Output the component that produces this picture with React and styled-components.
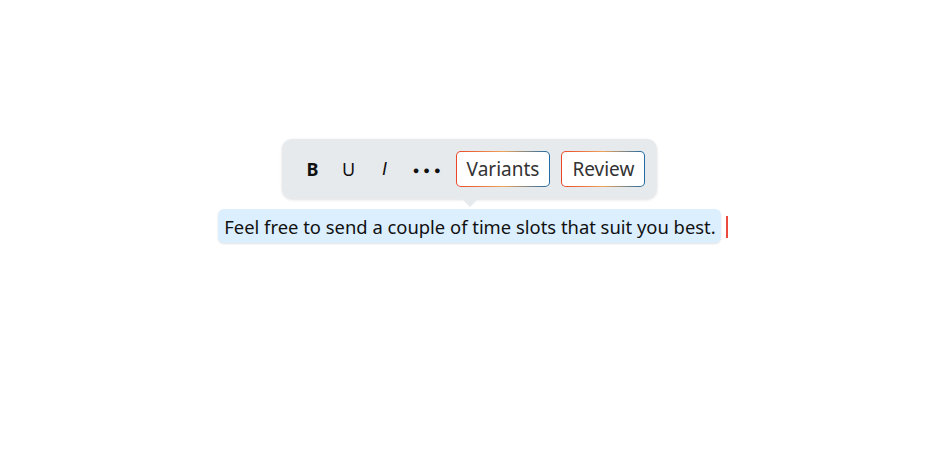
import styled, { createGlobalStyle } from "styled-components"

const GlobalStyle = createGlobalStyle`
  html, body {
    margin: 0;
    padding: 0;
    background: #ffffff;
    font-family: "Noto Sans", "Liberation Sans", sans-serif;
  }
`;

const sentence = 'Feel free to send a couple of time slots that suit you best.';
const formatButtons = [
  { label: 'B', bold: true },
  { label: 'U' },
  { label: 'I', italic: true },
];
const actions = ['Variants', 'Review'];

const Page = styled.main`
  width: 942px;
  height: 453px;
  display: flex;
  flex-flow: column nowrap;
  align-items: center;
  padding-top: 139px;
  padding-right: 3px;
  box-sizing: border-box;
`;

const Toolbar = styled.div`
  position: relative;
  display: flex;
  align-items: center;
  gap: 2px;
  padding: 12px 12px 12px 14px;
  background: #e6eaed;
  border-radius: 10px;
  box-shadow: 0 1px 3px rgba(0, 0, 0, 0.12);

  &::after {
    content: '';
    position: absolute;
    left: 180px;
    bottom: -8px;
    border-left: 8px solid transparent;
    border-right: 8px solid transparent;
    border-top: 8px solid #e6eaed;
  }
`;

const FormatButton = styled.button`
  width: ${(p) => (p.$wide ? 46 : 34)}px;
  height: 36px;
  border: none;
  background: transparent;
  padding: 0;
  font-family: ${(p) => (p.$italic ? '"Liberation Sans", sans-serif' : '"Noto Sans", sans-serif')};
  font-size: ${(p) => (p.$wide ? 11 : 18)}px;
  color: #111;
  font-weight: ${(p) => (p.$bold ? 700 : 400)};
  font-style: ${(p) => (p.$italic ? 'italic' : 'normal')};
  letter-spacing: ${(p) => (p.$wide ? '4px' : '0')};
  text-indent: ${(p) => (p.$wide ? '4px' : '0')};
  cursor: pointer;
`;

const ActionButton = styled.button`
  margin-left: ${(p) => (p.$first ? 4 : 9)}px;
  height: 36px;
  padding: 0 10px;
  border: 1.5px solid transparent;
  border-radius: 5px;
  background:
    linear-gradient(#fff, #fff) padding-box,
    linear-gradient(90deg, #ea4526 0%, #f0a35a 50%, #1e6aa6 100%) border-box;
  font-family: "Noto Sans", sans-serif;
  font-size: 19px;
  color: #333;
  cursor: pointer;
`;

const TextRow = styled.div`
  position: relative;
  margin-top: 10px;
`;

const Bubble = styled.div`
  height: 34px;
  display: flex;
  align-items: center;
  padding: 0 5px 0 6px;
  background: #dcefff;
  border-radius: 6px;
  box-shadow: 0 1px 2px rgba(0, 0, 0, 0.12);
  font-size: 18.4px;
  color: #111;
  white-space: nowrap;
`;

const Caret = styled.span`
  position: absolute;
  top: 7px;
  right: -7px;
  width: 2px;
  height: 22px;
  background: #ec4a3c;
`;

const App = () => {
  return (
    <>
      <GlobalStyle />
      <Page>
        <Toolbar>
          {formatButtons.map(({ label, bold, italic }) => (
            <FormatButton key={label} $bold={bold} $italic={italic}>{label}</FormatButton>
          ))}
          <FormatButton $wide>{'●●●'}</FormatButton>
          {actions.map((text, i) => (
            <ActionButton key={text} $first={i === 0}>{text}</ActionButton>
          ))}
        </Toolbar>
        <TextRow>
          <Bubble>{sentence}</Bubble>
          <Caret />
        </TextRow>
      </Page>
    </>
  )
}

export default App
